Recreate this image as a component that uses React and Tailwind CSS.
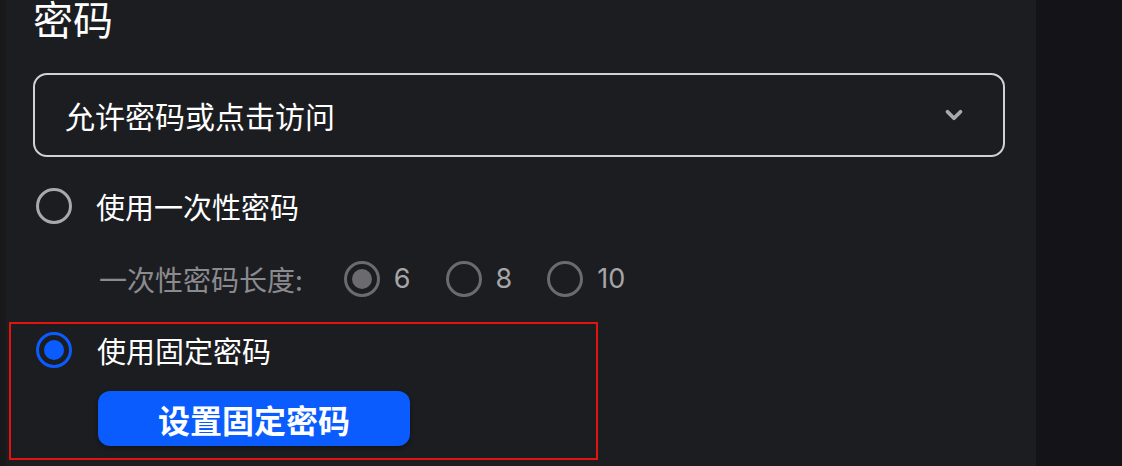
import React from "react";
import { ChevronDown } from "lucide-react";

const cjk = { fontFamily: '"Noto Sans CJK SC", "Noto Sans", sans-serif' };
const num = { fontFamily: 'Inter, "Noto Sans", sans-serif' };

const Radio = ({ checked, tone = "light" }) => {
  if (checked && tone === "blue") {
    return (
      <span className="flex h-[36px] w-[36px] shrink-0 items-center justify-center rounded-full border-[3px] border-[#0b5cff]">
        <span className="h-[20px] w-[20px] rounded-full bg-[#0b5cff]" />
      </span>
    );
  }
  const border = tone === "dim" ? "border-[#6b6b6f]" : "border-[#a9a9ab]";
  return (
    <span
      className={`flex h-[36px] w-[36px] shrink-0 items-center justify-center rounded-full border-[3px] ${border}`}
    >
      {checked && <span className="h-[20px] w-[20px] rounded-full bg-[#6b6b6f]" />}
    </span>
  );
};

const App = () => {
  return (
    <div className="flex h-[466px] w-[1122px] overflow-hidden bg-[#1c1d21]" style={cjk}>
      {/* Main panel */}
      <div className="flex w-[1036px] flex-col border-l-[6px] border-[#19191c] pl-[27px] pr-[31px]">
        <h2 className="h-[37px] text-[40px] leading-[37px] font-normal text-white">
          密码
        </h2>

        {/* Access mode select */}
        <div className="mt-[36px] flex h-[84px] items-center justify-between rounded-[14px] border-2 border-[#d2d2d4] pl-[30px] pr-[36px]">
          <span className="text-[30px] text-white">允许密码或点击访问</span>
          <ChevronDown size={26} strokeWidth={3.5} className="text-[#a9a9ab]" />
        </div>

        {/* One-time password */}
        <label className="mt-[31px] flex items-center gap-[24px] pl-[3px]">
          <Radio />
          <span className="text-[29px] leading-[36px] text-white">使用一次性密码</span>
        </label>

        <div className="mt-[37px] flex items-center pl-[66px]">
          <span className="text-[28px] leading-[36px] text-[#8b8b8f]">一次性密码长度:</span>
          <div className="ml-[41px] flex items-center gap-[35px]" style={num}>
            {[
              { v: "6", checked: true },
              { v: "8" },
              { v: "10" },
            ].map((o) => (
              <span key={o.v} className="flex items-center gap-[14px]">
                <Radio checked={o.checked} tone="dim" />
                <span className="text-[27px] leading-[36px] text-[#a6a6a9]">{o.v}</span>
              </span>
            ))}
          </div>
        </div>

        {/* Fixed password (highlighted) */}
        <div className="mt-[25px] -ml-[24px] flex h-[138px] w-[589px] flex-col border-2 border-[#e3140f] pl-[25px] pt-[8px]">
          <label className="flex items-center gap-[25px]">
            <Radio checked tone="blue" />
            <span className="text-[29px] leading-[36px] text-white">使用固定密码</span>
          </label>
          <button className="mt-[23px] ml-[62px] flex h-[55px] w-[312px] items-center justify-center rounded-[12px] bg-[#0b5cff] text-[32px] font-bold text-white shadow-[0_2px_4px_rgba(0,0,0,0.35)]">
            设置固定密码
          </button>
        </div>
      </div>

      {/* Right side strip */}
      <div className="flex-1 bg-[#141418]" />
    </div>
  );
};

export default App;
